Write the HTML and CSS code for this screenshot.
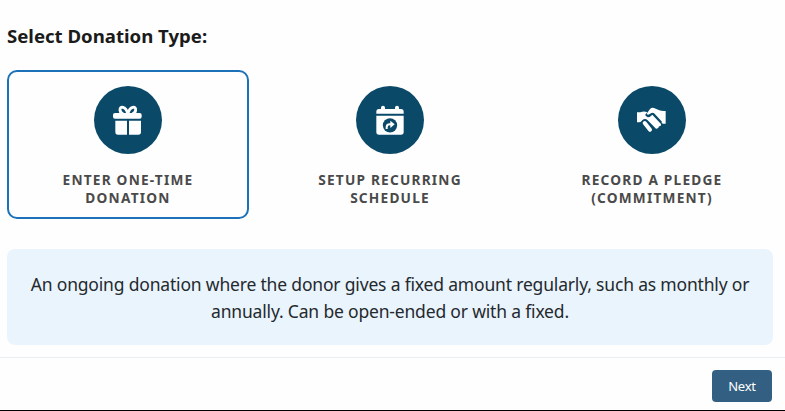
FILE: index.html
```
<!DOCTYPE html>
<html lang="en">
<head>
<meta charset="utf-8">
<title>Select Donation Type</title>
<link rel="stylesheet" href="styles.css">
</head>
<body>
<main class="content">
  <h1 class="title">Select Donation Type:</h1>
  <div class="options">
    <div class="option selected">
      <svg class="icon" viewBox="18 18 204 204" aria-hidden="true">
        <circle cx="120" cy="120" r="102" fill="#0a4a68"/>
        <path d="M119 100C113 79 95 77 96 90Q97 100 106 102M120 100C126 79 144 77 143 90Q142 100 133 102" fill="none" stroke="#fff" stroke-width="8.5"/>
        <rect x="75" y="99" width="86" height="17" rx="6" fill="#fff"/>
        <path d="M82 122H117V164H90Q82 164 82 156ZM123 122H159V156Q159 164 151 164H123Z" fill="#fff"/>
      </svg>
      <div class="label">Enter One-Time<br>Donation</div>
    </div>
    <div class="option">
      <svg class="icon" viewBox="18 18 204 204" aria-hidden="true">
        <circle cx="120" cy="120" r="102" fill="#0a4a68"/>
        <path d="M79 101V95Q79 87 87 87H93V83Q93 77 99 77Q105 77 105 83V87H135V83Q135 77 141 77Q147 77 147 83V87H153Q161 87 161 95V101ZM79 107H161V156Q161 164 153 164H87Q79 164 79 156Z" fill="#fff"/>
        <circle cx="120" cy="136" r="21.5" fill="#0a4a68"/>
        <path d="M110 147V142Q110 133 119 133H125" fill="none" stroke="#fff" stroke-width="6"/>
        <path d="M121 122L134 133L121 144Z" fill="#fff"/>
      </svg>
      <div class="label">Setup Recurring<br>Schedule</div>
    </div>
    <div class="option">
      <svg class="icon" viewBox="18 18 204 204" aria-hidden="true">
        <circle cx="120" cy="120" r="102" fill="#0a4a68"/>
        <path d="M75 97L85 97Q96 92 106 97L101 102Q98 109 106 110Q112 111 121 104L147 132Q148 139 141 139Q140 147 132 146L107 121Q98 112 88 124Q86 127 81 127H75Z" fill="#fff"/>
        <path d="M104 101L114 87Q119 82 126 84L142 91Q149 94 161 93V131H152L129 105Q122 95 112 103Q107 106 104 101Z" fill="#fff"/>
        <path d="M106 109Q113 110 120 101Q124 99 128 105L148 127" fill="none" stroke="#0a4a68" stroke-width="5"/>
        <path d="M98 129L115 147" fill="none" stroke="#0a4a68" stroke-width="20" stroke-linecap="round"/>
        <path d="M98 129L114 149" fill="none" stroke="#fff" stroke-width="12" stroke-linecap="round"/>
      </svg>
      <div class="label">Record a Pledge<br>(Commitment)</div>
    </div>
  </div>
  <p class="description"><span class="line">An ongoing donation where the donor gives a fixed amount regularly, such as monthly or</span> <span class="line">annually. Can be open-ended or with a fixed.</span></p>
</main>
<footer class="footer"><button class="next" type="button">Next</button></footer>
</body>
</html>
```
FILE: styles.css
```
* { box-sizing: border-box; }
body {
  margin: 0;
  height: 411px;
  display: flex;
  flex-direction: column;
  overflow: hidden;
  background: #fefefe;
  border-bottom: 1px solid #000;
  font-family: "Noto Sans", sans-serif;
}
.content { height: 357px; padding: 22px 12px 0 7px; }
.title {
  margin: 0 0 20px;
  font-size: 18.6px;
  line-height: 28px;
  font-weight: 700;
  color: #1b1b1b;
}
.options {
  display: grid;
  grid-template-columns: repeat(3, 242px);
  gap: 20px;
}
.option {
  height: 149px;
  padding-top: 14px;
  display: flex;
  flex-direction: column;
  align-items: center;
  border: 2px solid transparent;
  border-radius: 10px;
}
.selected { border-color: #1c72b8; }
.icon { width: 68px; height: 68px; flex: none; }
.label {
  margin-top: 17px;
  font-size: 13.7px;
  line-height: 18px;
  font-weight: 700;
  letter-spacing: 1.2px;
  text-align: center;
  text-transform: uppercase;
  color: #4a4a4a;
}
.description {
  margin: 30px 0 0;
  height: 96px;
  padding-top: 22px;
  border-radius: 8px;
  background: #eaf4fd;
  font-size: 17.5px;
  line-height: 27px;
  letter-spacing: -0.18px;
  text-align: center;
  color: #24292d;
}
.line { display: block; white-space: nowrap; }
.footer {
  flex: 1;
  display: flex;
  justify-content: flex-end;
  padding: 12px 13px 0 0;
  border-top: 1px solid #e9eef0;
}
.next {
  width: 60px;
  height: 32px;
  padding: 0;
  border: 0;
  border-radius: 4px;
  background: #335f82;
  color: #fff;
  font: 13px "Noto Sans", sans-serif;
  letter-spacing: -0.2px;
}
```
